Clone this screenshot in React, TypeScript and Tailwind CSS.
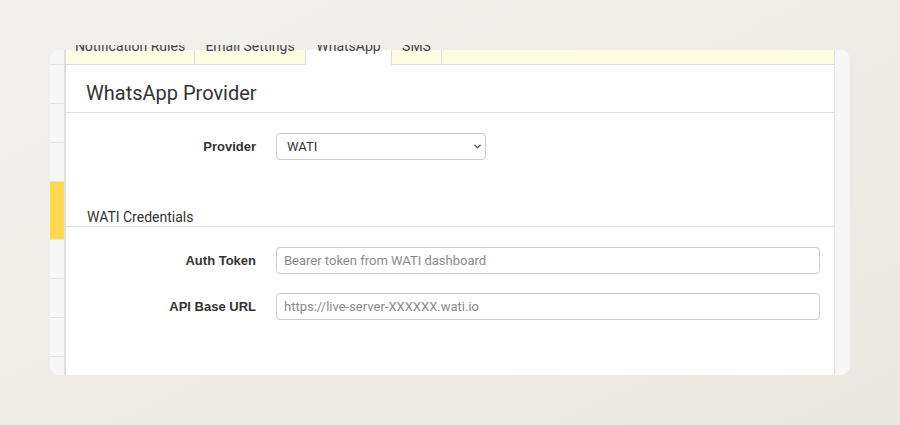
import { ChevronDown } from 'lucide-react'

const tabs = [
  { label: 'Notification Rules', width: 'w-[129px]' },
  { label: 'Email Settings', width: 'w-[111px]' },
  { label: 'WhatsApp', width: 'w-[86px]', active: true },
  { label: 'SMS', width: 'w-[50px]' },
]

// left nav strip: row heights, the highlighted one is the current section
const navRows = [
  { h: 'h-[15px]' },
  { h: 'h-[39px]' },
  { h: 'h-[39px]' },
  { h: 'h-[39px]' },
  { h: 'h-[58px]', active: true },
  { h: 'h-[39px]' },
  { h: 'h-[39px]' },
  { h: 'h-[39px]' },
  { h: 'h-[30px]' },
]

function Field({ label, placeholder }: { label: string; placeholder: string }) {
  return (
    <div className="flex items-center">
      <label className="w-[190px] shrink-0 text-right font-['Liberation_Sans',sans-serif] text-[13px] font-bold text-[#333]">
        {label}
      </label>
      <input
        placeholder={placeholder}
        className="ml-[20px] h-[27px] flex-1 rounded-[4px] border border-[#ccc] bg-white px-[7px] font-['Roboto',sans-serif] text-[13px] text-[#333] outline-none placeholder:text-[#8a8a8a]"
      />
    </div>
  )
}

export default function App() {
  return (
    <div className="h-[425px] w-[900px] bg-gradient-to-br from-[#f3f1ee] to-[#ebe7e1] px-[50px] pt-[45px]">
      <div className="overflow-hidden">
        <div className="mt-[5px] flex h-[325px] rounded-[10px] bg-[#f7f7f7]">
          <div className="flex w-[14px] shrink-0 flex-col overflow-hidden rounded-l-[10px]">
            {navRows.map((r, i) => (
              <div
                key={i}
                className={`${r.h} shrink-0 border-b border-[#e3e3e3] ${r.active ? 'bg-[#ffd84d]' : 'bg-[#f7f7f7]'}`}
              />
            ))}
          </div>

          <div className="flex flex-1 flex-col border-l-2 border-r border-[#dedede] bg-white">
            <div className="flex h-[15px] shrink-0 bg-[#fffde1]">
              {tabs.map((t) => (
                <div
                  key={t.label}
                  className={`${t.width} flex shrink-0 justify-center border-r border-[#dcdcdc] ${t.active ? 'bg-white' : 'border-b'}`}
                >
                  <span className="-mt-[12px] whitespace-nowrap font-['Roboto',sans-serif] text-[14px] leading-[16px] text-[#444]">
                    {t.label}
                  </span>
                </div>
              ))}
              <div className="flex-1 border-b border-[#dcdcdc]" />
            </div>

            <h2 className="border-b border-[#dedede] px-[20px] pt-[16px] pb-[6px] font-['Roboto',sans-serif] text-[20px] leading-[25px] text-[#333]">
              WhatsApp Provider
            </h2>

            <div className="mt-[20px] flex items-center">
              <label className="w-[190px] shrink-0 text-right font-['Liberation_Sans',sans-serif] text-[13px] font-bold text-[#333]">
                Provider
              </label>
              <div className="relative ml-[20px] w-[210px]">
                <select className="h-[27px] w-full appearance-none rounded-[4px] border border-[#ccc] bg-white pl-[10px] font-['Roboto',sans-serif] text-[13px] text-[#333] outline-none">
                  <option>WATI</option>
                </select>
                <ChevronDown
                  size={11}
                  strokeWidth={3}
                  className="pointer-events-none absolute top-[8px] right-[3px] text-[#555]"
                />
              </div>
            </div>

            <h3 className="mt-[48px] border-b border-[#dedede] px-[21px] pb-0 font-['Roboto',sans-serif] text-[14px] leading-[18px] text-[#333]">
              WATI Credentials
            </h3>

            <div className="mt-[20px] flex flex-col gap-[19px] pr-[14px]">
              <Field label="Auth Token" placeholder="Bearer token from WATI dashboard" />
              <Field label="API Base URL" placeholder="https://live-server-XXXXXX.wati.io" />
            </div>
          </div>

          <div className="w-[15px] shrink-0 rounded-r-[10px] bg-[#f7f7f7]" />
        </div>
      </div>
    </div>
  )
}
